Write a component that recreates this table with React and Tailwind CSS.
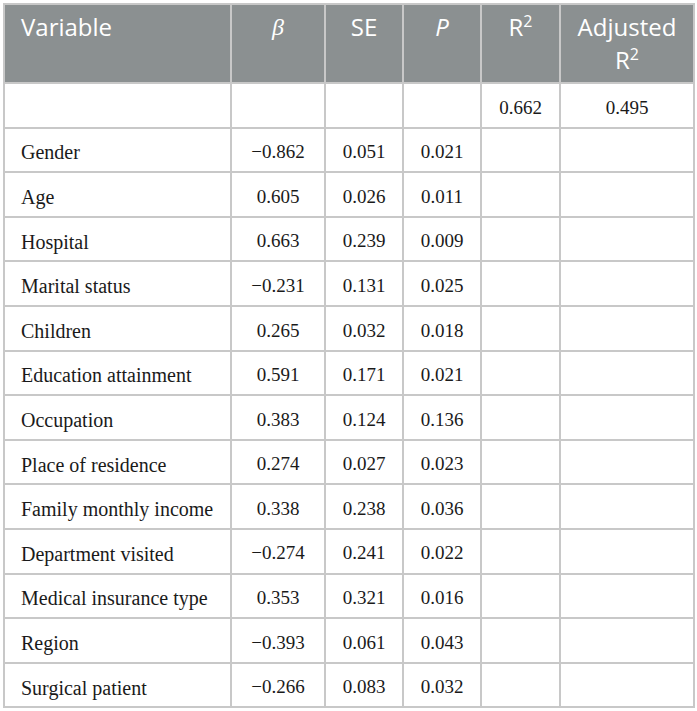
const rows = [
  ['Gender', '\u22120.862', '0.051', '0.021'],
  ['Age', '0.605', '0.026', '0.011'],
  ['Hospital', '0.663', '0.239', '0.009'],
  ['Marital status', '\u22120.231', '0.131', '0.025'],
  ['Children', '0.265', '0.032', '0.018'],
  ['Education attainment', '0.591', '0.171', '0.021'],
  ['Occupation', '0.383', '0.124', '0.136'],
  ['Place of residence', '0.274', '0.027', '0.023'],
  ['Family monthly income', '0.338', '0.238', '0.036'],
  ['Department visited', '\u22120.274', '0.241', '0.022'],
  ['Medical insurance type', '0.353', '0.321', '0.016'],
  ['Region', '\u22120.393', '0.061', '0.043'],
  ['Surgical patient', '\u22120.266', '0.083', '0.032'],
]

const th = 'border-2 border-[#c8c8c8] align-top pt-[8px] pb-1 font-normal text-white text-[24px] leading-[28px]'
const td = 'border-2 border-[#c8c8c8] text-center text-[19px] pt-[5px]'

export default function App() {
  return (
    <div className="p-[3px] bg-white">
      <table
        className="table-fixed border-collapse w-[690px] text-[#1a1a1a] font-['Liberation_Serif',serif]"
      >
        <colgroup>
          <col className="w-[227px]" />
          <col className="w-[94px]" />
          <col className="w-[78px]" />
          <col className="w-[78px]" />
          <col className="w-[79px]" />
          <col className="w-[134px]" />
        </colgroup>
        <thead className="bg-[#8b9091] font-['Open_Sans',sans-serif]">
          <tr className="h-[79px]">
            <th className={`${th} text-left pl-[16px]`}>Variable</th>
            <th className={`${th} text-center italic font-['Liberation_Serif',serif]`}>β</th>
            <th className={`${th} text-center`}>SE</th>
            <th className={`${th} text-center italic`}>P</th>
            <th className={`${th} text-center`}>
              R<sup className="text-[16px] -top-[0.55em]">2</sup>
            </th>
            <th className={`${th} text-center`}>
              <div>Adjusted</div>
              <div className="mt-[5px]">
                R<sup className="text-[16px] -top-[0.55em]">2</sup>
              </div>
            </th>
          </tr>
        </thead>
        <tbody>
          <tr className="h-[44.6px]">
            <td className={td}></td>
            <td className={td}></td>
            <td className={td}></td>
            <td className={td}></td>
            <td className={td}>0.662</td>
            <td className={td}>0.495</td>
          </tr>
          {rows.map(r => (
            <tr key={r[0]} className="h-[44.6px]">
              <td className={`${td} text-left pl-[16px] text-[20px]`}>{r[0]}</td>
              <td className={td}>{r[1]}</td>
              <td className={td}>{r[2]}</td>
              <td className={td}>{r[3]}</td>
              <td className={td}></td>
              <td className={td}></td>
            </tr>
          ))}
        </tbody>
      </table>
    </div>
  )
}
